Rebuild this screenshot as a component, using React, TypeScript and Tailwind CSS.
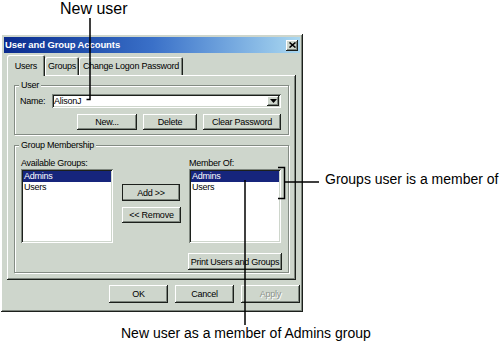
const raised = 'shadow-[inset_-1px_-1px_#1c201c,inset_1px_1px_#ffffff,inset_-2px_-2px_#7e867e]'
const sunken = 'shadow-[inset_1px_1px_#7e867e,inset_-1px_-1px_#ffffff,inset_2px_2px_#1c201c,inset_-2px_-2px_#ced6cc]'
const etched = 'border border-[#848c84] shadow-[inset_1px_1px_#ffffff,1px_1px_#ffffff]'
const tab = 'flex items-center justify-center rounded-t-[2px] shadow-[inset_1px_1px_#ffffff,inset_-1px_0_#1c201c,inset_-2px_0_#7e867e]'

function Btn({ label, className, disabled }: { label: string; className: string; disabled?: boolean }) {
  return (
    <div className={`flex items-center justify-center bg-[#ced6cc] ${raised} ${className}`}>
      <span className={disabled ? 'text-[#8c948c] [text-shadow:1px_1px_#ffffff]' : 'text-black'}>{label}</span>
    </div>
  )
}

function GroupBox({ title, className, children }: { title: string; className: string; children: React.ReactNode }) {
  return (
    <div className={`relative ${etched} ${className}`}>
      <span className="absolute -top-[7px] left-[4px] px-[2px] bg-[#ced6cc] leading-[12px]">{title}</span>
      {children}
    </div>
  )
}

function ListBox({ items }: { items: string[] }) {
  return (
    <div className={`w-[92px] h-[74px] bg-white p-[2px] ${sunken}`}>
      {items.map((item, i) => (
        <div key={item} className={`h-[11px] leading-[11px] pl-[1px] ${i === 0 ? 'bg-[#16257c] text-white' : 'text-black'}`}>{item}</div>
      ))}
    </div>
  )
}

function Dialog() {
  return (
    <div className={`ml-[1px] w-[302px] h-[278px] p-[3px] bg-[#ced6cc] text-[9px] tracking-[-0.25px] leading-[12px] whitespace-nowrap text-black font-['Liberation_Sans',Arial,sans-serif] ${raised}`}>
      <div className="h-[16px] flex items-center justify-between pl-[1px] pr-[2px] bg-linear-to-r from-[#0b2a8e] via-[#3a70c8] to-[#aad8f0]">
        <span className="text-white font-bold text-[9.5px] tracking-[-0.1px]">User and Group Accounts</span>
        <div className={`w-[12px] h-[11px] flex items-center justify-center bg-[#ced6cc] ${raised}`}>
          <svg width="7" height="6" viewBox="0 0 7 6">
            <path d="M0.5 0.5 L6.5 5.5 M6.5 0.5 L0.5 5.5" stroke="#000" strokeWidth="1.6" />
          </svg>
        </div>
      </div>

      <div className="pl-[3px]">
        <div className="h-[22px] flex items-end">
          <div className={`relative z-10 -mb-px h-[21px] w-[38px] bg-[#ced6cc] ${tab}`}>Users</div>
          <div className={`h-[18px] w-[34px] ${tab}`}>Groups</div>
          <div className={`h-[18px] w-[104px] ${tab}`}>Change Logon Password</div>
        </div>

        <div className={`w-[289px] h-[205px] pt-[10px] ${raised}`}>
          <GroupBox title="User" className="ml-[7px] w-[275px] h-[50px]">
            <div className="flex items-center mt-[8px] ml-[5px]">
              <span className="w-[32px]">Name:</span>
              <div className={`w-[229px] h-[14px] flex items-center justify-between bg-white pl-[2px] pr-[2px] ${sunken}`}>
                <span>AlisonJ</span>
                <div className={`w-[12px] h-[10px] flex items-center justify-center bg-[#ced6cc] ${raised}`}>
                  <svg width="7" height="4" viewBox="0 0 7 4">
                    <path d="M0 0 L7 0 L3.5 4 Z" fill="#000" />
                  </svg>
                </div>
              </div>
            </div>
            <div className="flex justify-end gap-[6px] pr-[7px] mt-[6px]">
              <Btn label="New..." className="w-[60px] h-[16px]" />
              <Btn label="Delete" className="w-[54px] h-[16px]" />
              <Btn label="Clear Password" className="w-[78px] h-[16px]" />
            </div>
          </GroupBox>

          <GroupBox title="Group Membership" className="mt-[10px] ml-[7px] w-[275px] h-[128px]">
            <div className="flex mt-[11px]">
              <div className="ml-[6px] w-[92px]">
                <div className="h-[12px]">Available Groups:</div>
                <ListBox items={['Admins', 'Users']} />
              </div>
              <div className="ml-[9px] w-[59px] pt-[27px]">
                <Btn label="Add >>" className="w-[58px] h-[17px] outline outline-1 outline-[#1c201c] -outline-offset-1" />
                <Btn label="<< Remove" className="mt-[6px] w-[59px] h-[16px]" />
              </div>
              <div className="ml-[8px] w-[92px]">
                <div className="h-[12px]">Member Of:</div>
                <ListBox items={['Admins', 'Users']} />
              </div>
            </div>
            <div className="flex justify-end pr-[6px] mt-[10px]">
              <Btn label="Print Users and Groups" className="w-[94px] h-[17px]" />
            </div>
          </GroupBox>
        </div>

        <div className="flex justify-end gap-[7px] mt-[5px]">
          <Btn label="OK" className="w-[59px] h-[18px]" />
          <Btn label="Cancel" className="w-[59px] h-[18px]" />
          <Btn label="Apply" className="w-[59px] h-[18px]" disabled />
        </div>
      </div>
    </div>
  )
}

export default function App() {
  return (
    <div className="relative w-[500px] h-[346px] bg-white overflow-hidden font-['Liberation_Sans',Arial,sans-serif] text-black">
      <div className="h-[34px] pl-[60px] text-[16px] leading-[18px]">New user</div>
      <div className="flex items-start">
        <Dialog />
        <div className="ml-[22px] mt-[137px] text-[14px] leading-[16px]">Groups user is a member of</div>
      </div>
      <div className="pl-[121px] mt-[13px] text-[14px] leading-[16px]">New user as a member of Admins group</div>

      <svg className="absolute inset-0 pointer-events-none" width="500" height="346" viewBox="0 0 500 346">
        <g stroke="#000" strokeWidth="1.5" fill="none">
          <path d="M90 18 L90 99.5 L86.5 99.5" />
          <path d="M278 167.5 L284.5 167.5 L284.5 198.5 L278 198.5" />
          <path d="M284.5 182 L319 182" />
          <path d="M245 180 L245 325" />
        </g>
      </svg>
    </div>
  )
}
